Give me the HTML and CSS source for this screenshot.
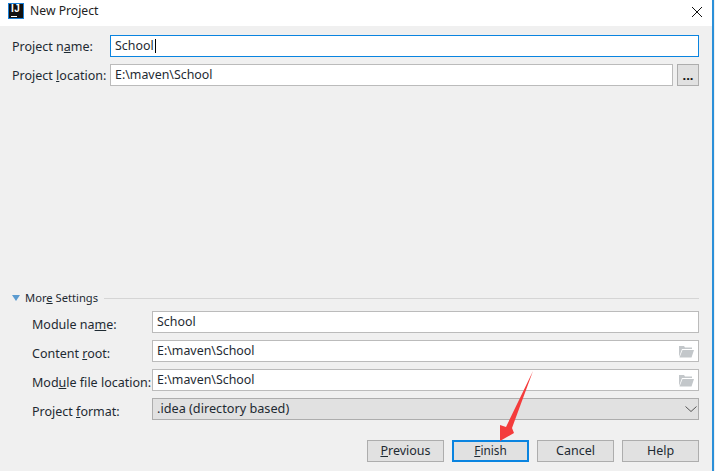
FILE: index.html
```html
<!DOCTYPE html>
<html lang="en">
<head>
<meta charset="utf-8">
<title>New Project</title>
<link rel="stylesheet" href="styles.css">
</head>
<body>
<div class="window">
  <header class="titlebar">
    <div class="app-icon"><span class="app-icon-text">IJ</span><span class="app-icon-bar"></span></div>
    <span class="title">New Project</span>
    <svg class="close" width="12" height="12" viewBox="0 0 12 12"><path d="M1 1L11 11M11 1L1 11" stroke="#111" stroke-width="1" fill="none"/></svg>
  </header>
  <main class="content">
    <section class="top">
      <div class="row">
        <label class="label label-top">Project n<u>a</u>me:</label>
        <div class="field field-focus"><span class="value">School</span><span class="caret"></span></div>
      </div>
      <div class="row">
        <label class="label label-top">Project <u>l</u>ocation:</label>
        <div class="field"><span class="value">E:\maven\School</span></div>
        <button class="browse"><span class="browse-dots">...</span></button>
      </div>
    </section>
    <section class="more">
      <div class="more-head">
        <svg class="tri" width="8" height="6" viewBox="0 0 8 6"><path d="M0 0H8L4 6Z" fill="#5b9bd0"/></svg>
        <span class="more-title">Mor<u>e</u> Settings</span>
        <span class="rule"></span>
      </div>
      <div class="rows">
        <div class="row">
          <label class="label label-sub">Module na<u>m</u>e:</label>
          <div class="field"><span class="value">School</span></div>
        </div>
        <div class="row">
          <label class="label label-sub">Content <u>r</u>oot:</label>
          <div class="field"><span class="value">E:\maven\School</span>
            <svg class="folder" width="16" height="13" viewBox="0 0 16 13"><path d="M1 1H6L7 2.5H14V4H4L1 12Z" fill="#c3c7ca"/><path d="M4.5 5H16L13.5 12.5H1.5Z" fill="#c3c7ca"/></svg>
          </div>
        </div>
        <div class="row">
          <label class="label label-sub">Mod<u>u</u>le file location:</label>
          <div class="field"><span class="value">E:\maven\School</span>
            <svg class="folder" width="16" height="13" viewBox="0 0 16 13"><path d="M1 1H6L7 2.5H14V4H4L1 12Z" fill="#c3c7ca"/><path d="M4.5 5H16L13.5 12.5H1.5Z" fill="#c3c7ca"/></svg>
          </div>
        </div>
        <div class="row">
          <label class="label label-sub">Project <u>f</u>ormat:</label>
          <div class="field field-select"><span class="value value-wide">.idea (directory based)</span>
            <svg class="chev" width="12" height="6" viewBox="0 0 12 6"><path d="M.5 .5L6 5.5L11.5 .5" stroke="#555" fill="none"/></svg>
          </div>
        </div>
      </div>
    </section>
    <footer class="actions">
      <button class="btn"><u>P</u>revious</button>
      <button class="btn btn-default"><u>F</u>inish</button>
      <button class="btn">Cancel</button>
      <button class="btn">Help</button>
    </footer>
  </main>
  <svg class="arrow" width="40" height="74" viewBox="498 369 40 74"><path d="M533 371L512 428L514 433L500 441L500 425L506 427Z" fill="#f43c3c"/></svg>
</div>
</body>
</html>
```
FILE: styles.css
```css
* { box-sizing: border-box; }
html, body { margin: 0; padding: 0; height: 100%; background: #f0f0f0; overflow: hidden; }
body { font-family: "Noto Sans", "Open Sans", sans-serif; font-size: 12px; color: #1e2a32; }
u { text-underline-offset: 1px; }
.window { position: relative; width: 714px; height: 471px; border-right: 2px solid #2b90d9; display: flex; flex-direction: column; }
.titlebar { height: 26px; background: #fff; display: flex; align-items: center; padding: 0 9px 5px 8px; flex: none; }
.app-icon { width: 16px; height: 16px; background: #111; border: 1px solid #1a7fd6; position: relative; flex: none; }
.app-icon-text { position: absolute; left: 2px; top: 0; color: #fff; font: bold 10px/9px "Liberation Sans", sans-serif; letter-spacing: 0.5px; }
.app-icon-bar { position: absolute; left: 2px; bottom: 1px; width: 6px; height: 1px; background: #fff; }
.title { margin-left: 6px; font-size: 12.2px; color: #222; }
.close { margin-left: auto; margin-top: 3px; }
.content { flex: 1; display: flex; flex-direction: column; padding: 9px 13px 9px 12px; min-height: 0; }
.top { display: flex; flex-direction: column; gap: 7px; flex: 1; }
.row { display: flex; align-items: center; height: 22px; }
.label { flex: none; white-space: nowrap; font-size: 12.5px; }
.label-top { width: 98px; }
.label-sub { width: 140px; padding-left: 20px; padding-top: 4px; }
.field { flex: 1; height: 22px; background: #fff; border: 1px solid #bbb; padding: 0 4px; display: flex; align-items: center; justify-content: space-between; white-space: nowrap; min-width: 0; }
.value { font-size: 12.4px; padding-bottom: 2px; }
.value-wide { font-size: 12.7px; }
.field-focus { border: 1px solid #0a84e0; justify-content: flex-start; }
.caret { width: 1px; height: 14px; background: #000; margin-left: 1px; }
.browse { flex: none; width: 22px; height: 22px; margin-left: 4px; background: #e1e1e1; border: 1px solid #adadad; padding: 0; font: bold 13px/1 "Noto Sans", sans-serif; color: #111; }
.browse-dots { display: block; }
.more { display: flex; flex-direction: column; }
.more-head { display: flex; align-items: center; height: 16px; margin-bottom: 5px; }
.more-title { font-size: 11.2px; padding-bottom: 1px; }
.tri { margin-right: 5px; flex: none; }
.rule { flex: 1; height: 1px; background: #d5d5d5; margin-left: 6px; }
.rows { display: flex; flex-direction: column; gap: 7px; }
.field-select { background: #e1e1e1; border-color: #adadad; padding-right: 1px; }
.folder { flex: none; }
.actions { display: flex; justify-content: flex-end; gap: 8px; margin-top: 20px; flex: none; }
.btn { width: 77px; height: 22px; padding: 0 0 2px; background: #e1e1e1; border: 1px solid #adadad; font: 12.5px "Noto Sans", sans-serif; color: #1e2a32; }
.btn-default { border: 2px solid #0a84e0; font-size: 11.8px; }
.arrow { position: absolute; left: 498px; top: 369px; }
```
